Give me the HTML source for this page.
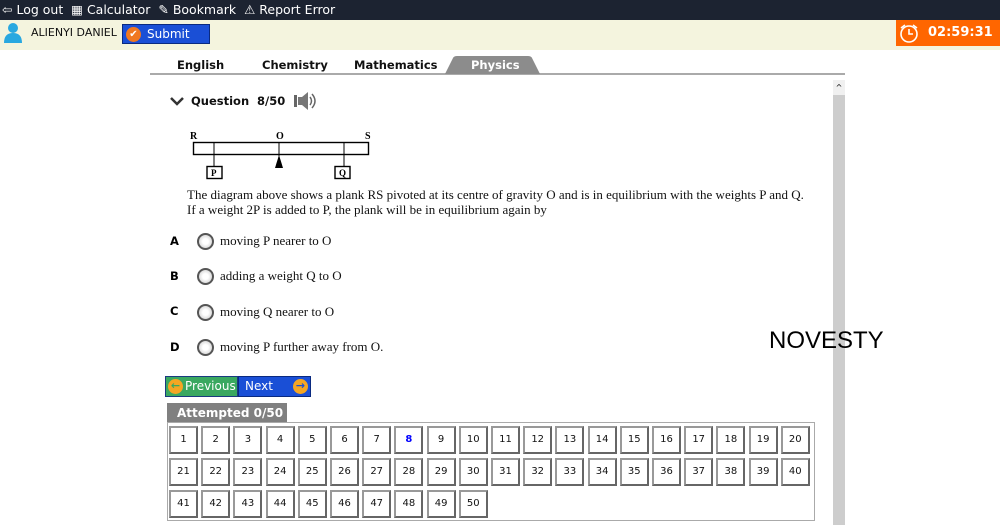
<!DOCTYPE html>
<html><head><style>
*{margin:0;padding:0;box-sizing:border-box}
body{width:1000px;height:525px;overflow:hidden;background:#fff;font-family:Verdana,"DejaVu Sans",sans-serif;position:relative}
.a{position:absolute}
.top{left:0;top:0;width:1000px;height:20px;background:#1c2331;color:#fff;font-size:12.5px;line-height:20px}
.bar2{left:0;top:20px;width:1000px;height:30px;background:#f4f4de}
.tab{top:58px;font-size:11.5px;font-weight:bold;color:#111}
.serif{font-family:"Liberation Serif","DejaVu Serif",serif;font-size:13px;color:#111}
.radio{width:17px;height:17px;border:2px solid #555;border-radius:50%;background:radial-gradient(circle,#fff 30%,#ddd 70%)}
.lbl{font-size:11.5px;font-weight:bold;left:170px}
.cell{width:29px;height:28px;border:2px solid #999;border-right-color:#666;border-bottom-color:#666;font-size:10px;text-align:center;line-height:24px;color:#111;background:#fff}
</style></head><body>
<div class="a top"><span style="margin-left:2px">⇦ Log out &nbsp;▦ Calculator &nbsp;✎ Bookmark &nbsp;⚠ Report Error</span></div>
<div class="a bar2"></div>
<svg class="a" style="left:4px;top:23px" width="18" height="20"><circle cx="9" cy="5" r="5" fill="#29a8e0"/><path d="M0 20 Q0 10 9 10 Q18 10 18 20Z" fill="#29a8e0"/></svg>
<div class="a" style="left:31px;top:26px;font-size:11px;color:#111">ALIENYI DANIEL</div>
<div class="a" style="left:122px;top:24px;width:88px;height:20px;background:#1a4fd6;border:1px solid #0a2a80;color:#fff;font-size:12px;line-height:18px;padding-left:24px">Submit</div>
<div class="a" style="left:126px;top:27px;width:15px;height:15px;border-radius:50%;background:#f07820;color:#fff;font-size:10px;text-align:center;line-height:15px">✔</div>
<div class="a" style="left:896px;top:20px;width:104px;height:26px;background:#ff6600"></div>
<svg class="a" style="left:898px;top:22px" width="22" height="22"><circle cx="11" cy="12" r="8" fill="none" stroke="#fff" stroke-width="1.6"/><path d="M11 7v5h4M3 6l4-3M19 6l-4-3" stroke="#fff" stroke-width="1.6" fill="none"/></svg>
<div class="a" style="left:928px;top:25px;color:#fff;font-size:13px;font-weight:bold">02:59:31</div>

<div class="a" style="left:150px;top:73px;width:695px;height:2px;background:#aaa"></div>
<svg class="a" style="left:445px;top:56px" width="95" height="18"><path d="M0 18 L8 2 Q9 0 12 0 L83 0 Q86 0 87 2 L95 18Z" fill="#8c8c8c"/></svg>
<div class="a tab" style="left:177px">English</div>
<div class="a tab" style="left:262px">Chemistry</div>
<div class="a tab" style="left:354px">Mathematics</div>
<div class="a tab" style="left:471px;color:#fff">Physics</div>

<div class="a" style="left:833px;top:80px;width:12px;height:445px;background:#cdcdcd"></div>
<div class="a" style="left:833px;top:80px;width:12px;height:15px;background:#f0f0f0;font-size:8px;text-align:center;line-height:15px">^</div>

<svg class="a" style="left:170px;top:96px" width="14" height="10"><path d="M1 2l6 6 6-6" stroke="#333" stroke-width="2.5" fill="none"/></svg>
<div class="a" style="left:191px;top:94px;font-size:11.5px;font-weight:bold;color:#111">Question</div>
<div class="a" style="left:257px;top:94px;font-size:11.5px;font-weight:bold;color:#111">8/50</div>
<svg class="a" style="left:294px;top:91px" width="24" height="20"><rect x="0" y="4" width="3" height="12" fill="#666"/><path d="M4 6h4l6-5v18l-6-5H4z" fill="#777"/><path d="M16 6q3 4 0 8M18 3q6 7 0 14" stroke="#666" stroke-width="1.5" fill="none"/></svg>

<svg class="a" style="left:185px;top:128px" width="190" height="55" font-family="Liberation Serif,serif" font-weight="bold" font-size="10">
<text x="5" y="11">R</text><text x="91" y="11">O</text><text x="180" y="11">S</text>
<rect x="8.5" y="14.5" width="175" height="12" fill="none" stroke="#000" stroke-width="1.4"/>
<line x1="29" y1="14" x2="29" y2="38" stroke="#000"/><line x1="159" y1="14" x2="159" y2="38" stroke="#000"/><line x1="94" y1="14" x2="94" y2="28" stroke="#000"/>
<path d="M90 40 L94 27 L98 40Z"/>
<rect x="22" y="38.5" width="15" height="12" fill="none" stroke="#000" stroke-width="1.4"/><text x="26" y="48" font-size="9">P</text>
<rect x="150" y="38.5" width="15" height="12" fill="none" stroke="#000" stroke-width="1.4"/><text x="154" y="48" font-size="9">Q</text>
</svg>

<div class="a serif" style="left:187px;top:187px;line-height:15px">The diagram above shows a plank RS pivoted at its centre of gravity O and is in equilibrium with the weights P and Q.<br>If a weight 2P is added to P, the plank will be in equilibrium again by</div>

<div class="a lbl" style="top:234px">A</div><div class="a radio" style="left:197px;top:233px"></div><div class="a serif" style="left:220px;top:233px">moving P nearer to O</div>
<div class="a lbl" style="top:269px">B</div><div class="a radio" style="left:197px;top:268px"></div><div class="a serif" style="left:220px;top:268px">adding a weight Q to O</div>
<div class="a lbl" style="top:304px">C</div><div class="a radio" style="left:197px;top:304px"></div><div class="a serif" style="left:220px;top:304px">moving Q nearer to O</div>
<div class="a lbl" style="top:340px">D</div><div class="a radio" style="left:197px;top:339px"></div><div class="a serif" style="left:220px;top:339px">moving P further away from O.</div>

<div class="a" style="left:769px;top:327px;font-size:24px;font-family:'Liberation Sans',sans-serif;color:#000">NOVESTY</div>

<div class="a" style="left:165px;top:376px;width:73px;height:21px;background:#3aa860;border:1px solid #1a3a80;color:#fff;font-size:12px;line-height:19px;padding-left:19px">Previous</div>
<div class="a" style="left:168px;top:379px;width:15px;height:15px;border-radius:50%;background:#f5a623;color:#3aa860;font-size:11px;font-weight:bold;text-align:center;line-height:14px">←</div>
<div class="a" style="left:238px;top:376px;width:73px;height:21px;background:#1a4fd6;border:1px solid #0a2a80;color:#fff;font-size:12px;line-height:19px;padding-left:6px">Next</div>
<div class="a" style="left:293px;top:379px;width:15px;height:15px;border-radius:50%;background:#f5a623;color:#1a4fd6;font-size:11px;font-weight:bold;text-align:center;line-height:14px">→</div>

<div class="a" style="left:167px;top:403px;width:120px;height:20px;background:#808080;color:#fff;font-size:12px;font-weight:bold;line-height:20px;padding-left:10px">Attempted 0/50</div>
<div class="a" style="left:167px;top:422px;width:648px;height:99px;border:1px solid #aaa"></div>
<div id="g"></div>
<script>
var h='';
var rows=[[1,20],[21,40],[41,50]];
rows.forEach(function(r,ri){for(var k=r[0];k<=r[1];k++){var c=k-r[0];h+='<div class="a cell" style="left:'+(169+c*32.2)+'px;top:'+(426+ri*32)+'px;'+(k==8?'color:#00f;font-weight:bold':'')+'">'+k+'</div>';}});
document.getElementById('g').innerHTML=h;
</script>
</body></html>
